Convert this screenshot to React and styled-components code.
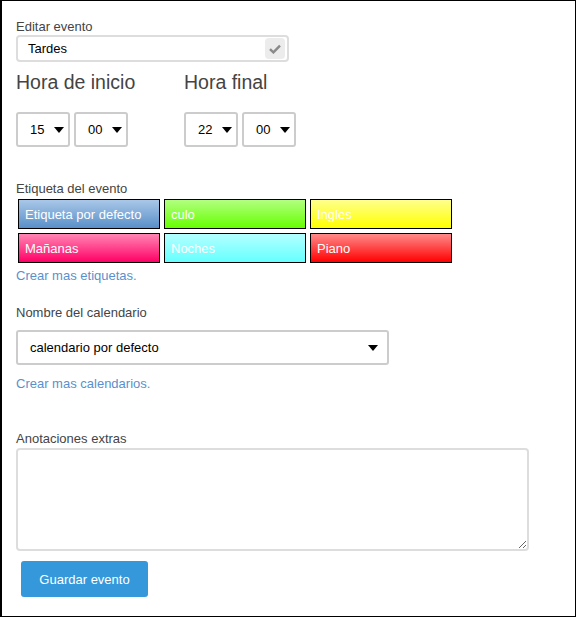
import React from "react";
import styled, { createGlobalStyle } from "styled-components";

const Global = createGlobalStyle`
  html, body { margin: 0; padding: 0; background: #fff; }
  body { font-family: "Liberation Sans", Arial, sans-serif; }
  * { box-sizing: border-box; }
`;

const Frame = styled.div`
  width: 576px;
  height: 617px;
  border: 1px solid #000;
  border-left-width: 2px;
  padding: 18px 14px 0;
  display: flex;
  flex-direction: column;
  font-family: "Liberation Sans", Arial, sans-serif;
`;

const Label = styled.div`
  font-size: 13px;
  line-height: 15px;
  color: #444;
  margin-top: ${(p) => p.$top || 0}px;
  margin-bottom: ${(p) => p.$bottom || 0}px;
`;

const TextField = styled.div`
  width: 273px;
  height: 27px;
  border: 2px solid #ddd;
  border-radius: 4px;
  display: flex;
  align-items: center;
  justify-content: space-between;
  padding: 0 2px 0 10px;
  font-size: 13px;
  color: #000;
`;

const CheckBox = styled.span`
  width: 20px;
  height: 21px;
  border-radius: 4px;
  background: #ececec;
  display: flex;
  align-items: center;
  justify-content: center;
`;

const TimeRow = styled.div`
  display: grid;
  grid-template-columns: 168px auto;
  margin-top: 9px;
`;

const TimeGroup = styled.div`
  display: flex;
  flex-direction: column;
`;

const Heading = styled.h2`
  margin: 0 0 18px;
  font-size: 19.5px;
  line-height: 23px;
  font-weight: normal;
  color: #444;
`;

const Selects = styled.div`
  display: flex;
  gap: 4px;
`;

const SmallSelect = styled.div`
  width: 54px;
  height: 35px;
  border: 2px solid #ccc;
  border-radius: 3px;
  display: flex;
  align-items: center;
  padding-left: ${(p) => p.$pad}px;
  gap: 10px;
  font-size: 13px;
  color: #000;
`;

const Arrow = styled.svg`
  flex: none;
  display: block;
`;

const TagGrid = styled.div`
  display: grid;
  grid-template-columns: repeat(3, 142px);
  grid-auto-rows: 30px;
  gap: 4px;
  margin-left: 2px;
`;

const Tag = styled.div`
  border: 1px solid #000;
  background: linear-gradient(to bottom, ${(p) => p.$from}, ${(p) => p.$to});
  color: #fff;
  font-size: 13px;
  display: flex;
  align-items: center;
  padding-left: 6px;
`;

const Link = styled.a`
  display: block;
  font-size: 13px;
  line-height: 15px;
  color: #5b8fcc;
  text-decoration: none;
  margin-top: ${(p) => p.$top || 0}px;
`;

const CalendarSelect = styled.div`
  width: 373px;
  height: 35px;
  border: 2px solid #ccc;
  border-radius: 3px;
  display: flex;
  align-items: center;
  justify-content: space-between;
  padding: 0 9px 0 12px;
  font-size: 13px;
  color: #000;
`;

const Notes = styled.textarea`
  display: block;
  width: 513px;
  height: 103px;
  border: 2px solid #ddd;
  border-radius: 4px;
  margin: 0;
  resize: vertical;
  font-family: inherit;
`;

const SaveButton = styled.button`
  width: 127px;
  height: 36px;
  margin: 10px 0 0 5px;
  border: none;
  border-radius: 3px;
  background: #3498db;
  color: #fff;
  font-family: inherit;
  font-size: 13px;
  padding: 0;
`;

const Caret = () => (
  <Arrow width="10" height="6" viewBox="0 0 10 6">
    <path d="M0 0 L10 0 L5 6 Z" fill="#000" />
  </Arrow>
);

const tags = [
  ["Etiqueta por defecto", "#a9c7e8", "#5a8fc9"],
  ["culo", "#b2ff80", "#66ff00"],
  ["Ingles", "#ffff8c", "#ffff00"],
  ["Mañanas", "#ff86b4", "#ff0066"],
  ["Noches", "#b4ffff", "#66ffff"],
  ["Piano", "#ff8a8a", "#ff0000"],
];

export default function App() {
  return (
    <>
      <Global />
      <Frame>
        <Label $bottom={1}>Editar evento</Label>
        <TextField>
          <span>Tardes</span>
          <CheckBox>
            <svg width="12" height="10" viewBox="0 0 12 10">
              <path d="M1 5.2 L4.4 8.4 L11 1.6" fill="none" stroke="#8a8a8a" strokeWidth="2.4" />
            </svg>
          </CheckBox>
        </TextField>
        <TimeRow>
          <TimeGroup>
            <Heading>Hora de inicio</Heading>
            <Selects>
              <SmallSelect $pad={12}>15 <Caret /></SmallSelect>
              <SmallSelect $pad={12}>00 <Caret /></SmallSelect>
            </Selects>
          </TimeGroup>
          <TimeGroup>
            <Heading>Hora final</Heading>
            <Selects>
              <SmallSelect $pad={12}>22 <Caret /></SmallSelect>
              <SmallSelect $pad={12}>00 <Caret /></SmallSelect>
            </Selects>
          </TimeGroup>
        </TimeRow>
        <Label $top={34} $bottom={3}>Etiqueta del evento</Label>
        <TagGrid>
          {tags.map(([name, from, to]) => (
            <Tag key={name} $from={from} $to={to}>{name}</Tag>
          ))}
        </TagGrid>
        <Link $top={5}>Crear mas etiquetas.</Link>
        <Label $top={22} $bottom={10}>Nombre del calendario</Label>
        <CalendarSelect>
          <span>calendario por defecto</span>
          <Caret />
        </CalendarSelect>
        <Link $top={11}>Crear mas calendarios.</Link>
        <Label $top={40} $bottom={2}>Anotaciones extras</Label>
        <Notes />
        <SaveButton>Guardar evento</SaveButton>
      </Frame>
    </>
  );
}
